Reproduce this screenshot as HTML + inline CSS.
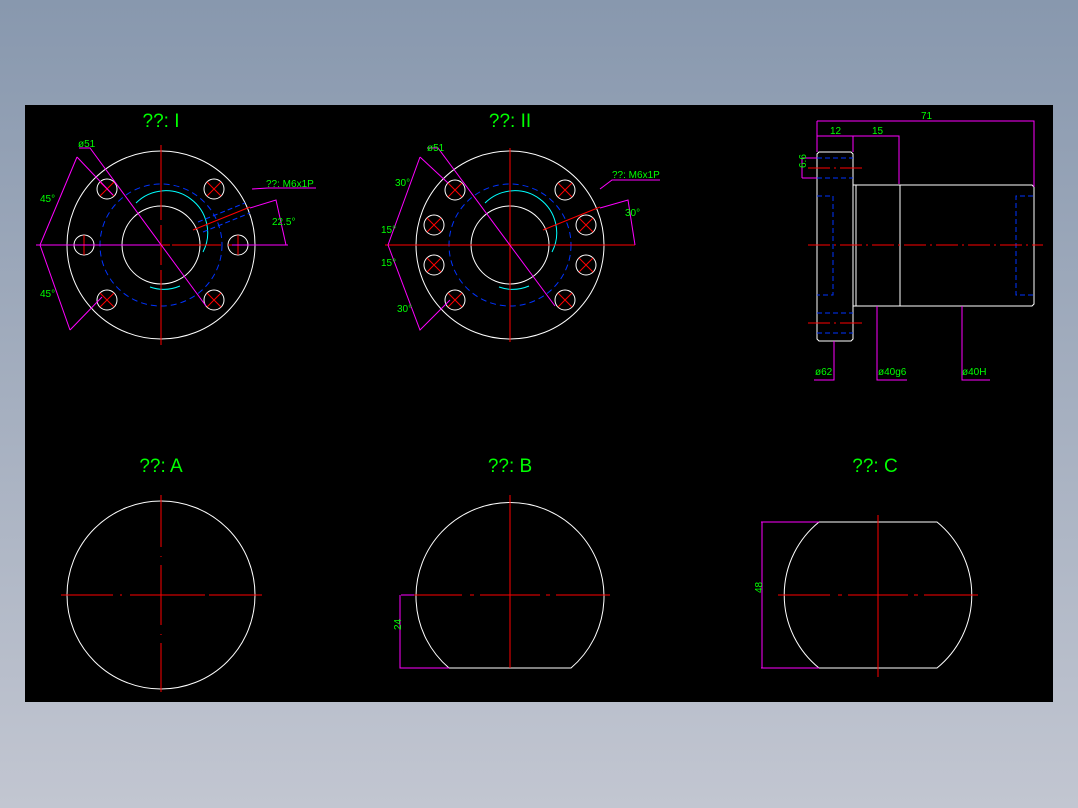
<!DOCTYPE html>
<html><head><meta charset="utf-8"><style>
html,body{margin:0;padding:0;width:1078px;height:808px;overflow:hidden;background:linear-gradient(#8898ae,#c2c6d1);}
svg{position:absolute;left:0;top:0}
text{font-family:"Liberation Sans",sans-serif;fill:#00ff00}
</style></head><body>
<svg width="1078" height="808" viewBox="0 0 1078 808">
<rect x="25" y="105" width="1028" height="597" fill="#000"/>
<g fill="none" stroke-width="1">
<!-- View I -->
<g stroke="#fff"><circle cx="161" cy="245" r="94"/><circle cx="161" cy="245" r="39"/>
<circle cx="107" cy="189" r="10"/><circle cx="214" cy="189" r="10"/><circle cx="84" cy="245" r="10"/><circle cx="238" cy="245" r="10"/><circle cx="107" cy="300" r="10"/><circle cx="214" cy="300" r="10"/></g>
<path d="M136 203 A42 42 0 0 1 203 252 M180 286 A42 42 0 0 1 150 287" stroke="#0ff"/>
<circle cx="161" cy="245" r="61" stroke="#0033ff" stroke-dasharray="6 4"/>
<g stroke="#f00"><path d="M36 245H90M100 245H150M152 245H170M172 245H221M228 245H262M161 145V220M161 225V265M161 270V345"/>
<path d="M100 182l14 14M114 182l-14 14M207 182l14 14M221 182l-14 14M100 293l14 14M114 293l-14 14M207 293l14 14M221 293l-14 14M84 235v20M238 235v20M193 230L250 207"/></g>
<path d="M198 222L245 203M203 232L250 213" stroke="#0033ff" stroke-dasharray="5 3"/>
<g stroke="#f0f"><path d="M79 148H90L206 306M252 189L268 188H316M250 208L276 200L286 245M77 157L40 245L70 330M77 157L113 195M70 330L102 297M36 245H160M232 245H288"/></g>
<!-- View II -->
<g stroke="#fff"><circle cx="510" cy="245" r="94"/><circle cx="510" cy="245" r="39"/>
<circle cx="455" cy="190" r="10"/><circle cx="565" cy="190" r="10"/><circle cx="434" cy="225" r="10"/><circle cx="586" cy="225" r="10"/><circle cx="434" cy="265" r="10"/><circle cx="586" cy="265" r="10"/><circle cx="455" cy="300" r="10"/><circle cx="565" cy="300" r="10"/></g>
<path d="M485 203 A42 42 0 0 1 552 252 M529 286 A42 42 0 0 1 499 287" stroke="#0ff"/>
<circle cx="510" cy="245" r="61" stroke="#0033ff" stroke-dasharray="6 4"/>
<g stroke="#f00"><path d="M385 245H635M510 148V342M448 183l14 14M462 183l-14 14M558 183l14 14M572 183l-14 14M427 218l14 14M441 218l-14 14M579 218l14 14M593 218l-14 14M427 258l14 14M441 258l-14 14M579 258l14 14M593 258l-14 14M448 293l14 14M462 293l-14 14M558 293l14 14M572 293l-14 14M543 230L600 207"/></g>
<g stroke="#f0f"><path d="M427 148H438L555 306M600 189L612 180H660M600 208L628 200L635 245M420 157L388 245L420 330L450 300M420 157L448 183"/></g>
<!-- side view -->
<g stroke="#fff"><path d="M819 152H851L853 154V339L851 341H819L817 339V154ZM853 185H1032L1034 187V304L1032 306H853M856 185V306M900 185V306"/></g>
<g stroke="#0033ff" stroke-dasharray="5 3"><path d="M817 158H853M817 178H853M817 196H833V295H817M817 313H853M817 333H853M1033 196H1016V295H1033"/></g>
<g stroke="#f00"><path d="M808 168H862M808 245H1043M808 323H862" stroke-dasharray="22 4 2 4"/></g>
<g stroke="#f0f"><path d="M817 121H1034V187M817 121V152M817 136H899V184M853 136V152M802 158H817M802 178H817M802 158V178M834 341V380H814M877 306V380H907M962 306V380H990"/></g>
<!-- bottom A -->
<circle cx="161" cy="595" r="94" stroke="#fff"/>
<path d="M61 595H113M120 595H122M130 595H205M200 595H202M209 595H262M161 495V547M161 556V557M161 565V625M161 634V635M161 643V692" stroke="#f00"/>
<!-- B -->
<path d="M449 668H571A94 94 0 1 0 449 668Z" stroke="#fff"/>
<path d="M410 595H462M470 595H474M480 595H540M546 595H550M556 595H610M510 495V668" stroke="#f00"/>
<path d="M401 595H414M400 595V668H449" stroke="#f0f"/>
<!-- C -->
<path d="M819 522H937A94 94 0 0 1 937 668H819A94 94 0 0 1 819 522Z" stroke="#fff"/>
<path d="M778 595H830M838 595H842M848 595H908M914 595H918M924 595H978M878 515V677" stroke="#f00"/>
<path d="M761 522H819M761 668H819M762 522V668" stroke="#f0f"/>
</g>
<g font-size="19" text-anchor="middle"><text x="161" y="127">??: I</text><text x="510" y="127">??: II</text><text x="161" y="472">??: A</text><text x="510" y="472">??: B</text><text x="875" y="472">??: C</text></g>
<g font-size="10"><text x="78" y="147">ø51</text><text x="266" y="187">??: M6x1P</text><text x="272" y="225">22.5°</text><text x="40" y="202">45°</text><text x="40" y="297">45°</text>
<text x="427" y="151">ø51</text><text x="612" y="178">??: M6x1P</text><text x="625" y="216">30°</text><text x="395" y="186">30°</text><text x="381" y="233">15°</text><text x="381" y="266">15°</text><text x="397" y="312">30°</text>
<text x="921" y="119">71</text><text x="830" y="134">12</text><text x="872" y="134">15</text><text x="815" y="375">ø62</text><text x="878" y="375">ø40g6</text><text x="962" y="375">ø40H</text>
<text x="802" y="172" transform="rotate(-90 802 168)">6.6</text><text x="399" y="636" transform="rotate(-90 397 632)">24</text><text x="760" y="599" transform="rotate(-90 758 595)">48</text></g>
</svg>
</body></html>
